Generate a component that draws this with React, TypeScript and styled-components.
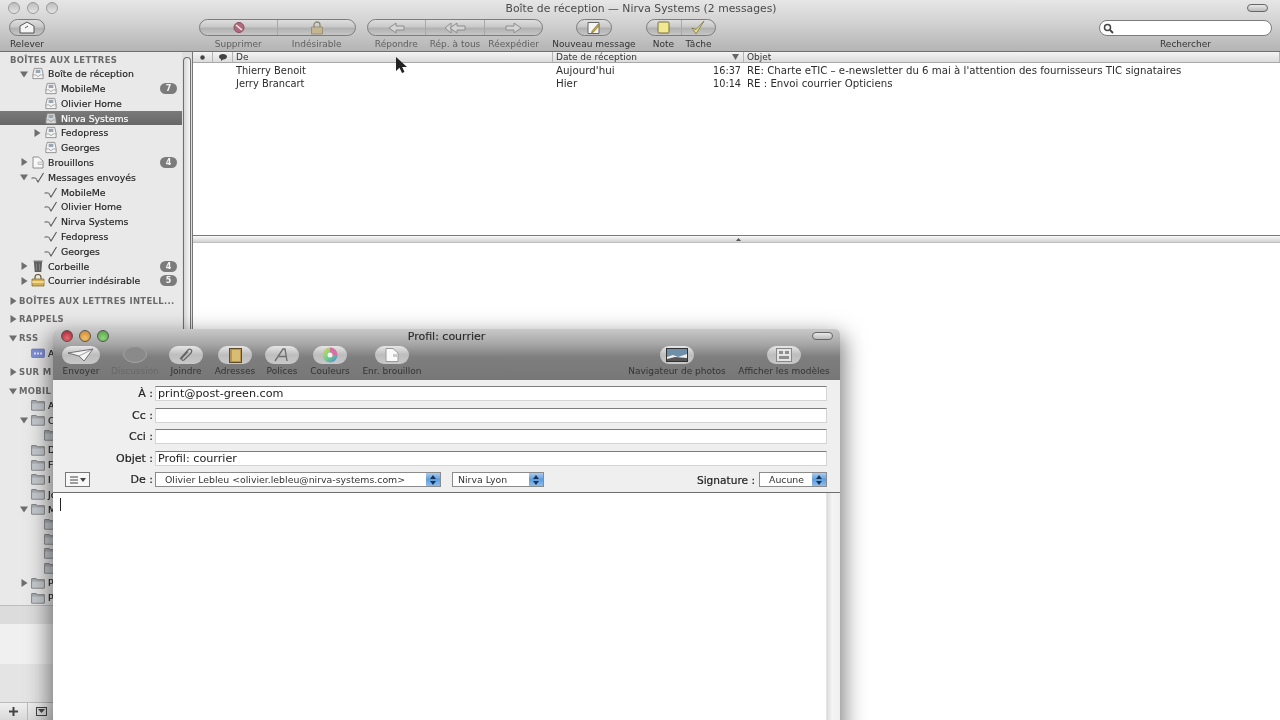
import React from "react";
import styled, { createGlobalStyle } from "styled-components";

const GlobalStyle = createGlobalStyle`
  html, body { margin: 0; padding: 0; background: #fff; }
  body { font-family: "DejaVu Sans", "Liberation Sans", sans-serif; color: #222; }
  * { box-sizing: border-box; }
`;

const Page = styled.div`
  position: relative;
  width: 1280px;
  height: 720px;
  overflow: hidden;
  display: flex;
  flex-direction: column;
  background: #fff;
  filter: blur(0.35px);
`;

/* ---------- main window top ---------- */

const TopBar = styled.header`
  height: 52px;
  flex: none;
  background: linear-gradient(#e6e6e6, #d4d4d4 40%, #b4b4b4);
  border-bottom: 1px solid #6f6f6f;
`;

const TitleRow = styled.div`
  position: relative;
  height: 16px;
  display: flex;
  align-items: center;
  padding: 0 12px 0 8px;
`;

const Lights = styled.div<{ $gap?: number }>`
  display: flex;
  gap: ${(p) => p.$gap || 7}px;
`;

const Light = styled.span<{ $color?: string }>`
  width: 12px;
  height: 12px;
  border-radius: 50%;
  border: 1px solid ${(p) => (p.$color ? "#555" : "#9a9a9a")};
  background: ${(p) => p.$color || "linear-gradient(#bdbdbd, #e4e4e4)"};
`;

const Title = styled.div`
  flex: 1;
  text-align: center;
  font-size: 10.8px;
  color: #4a4a4a;
  padding-right: 23px;
`;

const Pill = styled.span`
  width: 21px;
  height: 8px;
  border-radius: 4px;
  border: 1px solid #666;
  background: linear-gradient(#e8e8e8, #bbb);
`;

const Toolbar = styled.div`
  display: flex;
  align-items: flex-start;
  padding: 3px 8px 0 8px;
`;

const ToolGroup = styled.div<{ $width: number; $gap: number }>`
  width: ${(p) => p.$width}px;
  margin-right: ${(p) => p.$gap}px;
  flex: none;
  display: flex;
  flex-direction: column;
  align-items: center;
`;

const Capsule = styled.div<{ $width: number }>`
  width: ${(p) => p.$width}px;
  height: 17px;
  display: flex;
  border: 1px solid #7c7c7c;
  border-radius: 9px;
  background: linear-gradient(#dedede, #c9c9c9 45%, #b1b1b1 55%, #c6c6c6);
  overflow: hidden;
`;

const CapsuleCell = styled.div`
  flex: 1;
  display: flex;
  align-items: center;
  justify-content: center;
  & + & { border-left: 1px solid #a8a8a8; }
`;

const ToolLabels = styled.div`
  align-self: stretch;
  display: flex;
  margin-top: 1.5px;
`;

const ToolLabel = styled.span<{ $dim?: boolean }>`
  flex: 1;
  text-align: center;
  white-space: nowrap;
  font-size: 9px;
  line-height: 12px;
  color: ${(p) => (p.$dim ? "#5f5f5f" : "#333")};
`;

const SearchGroup = styled.div`
  margin-left: auto;
  width: 173px;
  display: flex;
  flex-direction: column;
  align-items: center;
`;

const SearchBox = styled.div`
  width: 100%;
  height: 16px;
  margin-top: 1px;
  border: 1px solid #7c7c7c;
  border-radius: 8px;
  background: #fff;
  display: flex;
  align-items: center;
  padding-left: 3px;
`;

/* ---------- body of main window ---------- */

const Body = styled.div`
  flex: 1;
  min-height: 0;
  display: flex;
`;

const Sidebar = styled.aside`
  width: 182px;
  flex: none;
  display: flex;
  flex-direction: column;
  background: #e9e9e9;
`;

const SidebarList = styled.div`
  height: 553px;
  flex: none;
  padding-top: 0.5px;
`;

const Row = styled.div<{ $level: number; $selected?: boolean }>`
  height: 14.8px;
  display: flex;
  align-items: center;
  padding-left: ${(p) => 20 + 13 * (p.$level - 1)}px;
  padding-right: 6px;
  font-size: 9.35px;
  -webkit-text-stroke: 0.15px;
  color: ${(p) => (p.$selected ? "#fff" : "#222")};
  background: ${(p) => (p.$selected ? "linear-gradient(#7a7a7a, #676767)" : "transparent")};
  white-space: nowrap;
`;

const SectionRow = styled.div<{ $top: number; $bare?: boolean }>`
  height: 14.8px;
  margin-top: ${(p) => p.$top}px;
  margin-bottom: ${(p) => (p.$bare ? -1 : 0)}px;
  display: flex;
  align-items: center;
  padding-left: ${(p) => (p.$bare ? 10 : 9)}px;
  font-size: 8.5px;
  font-weight: bold;
  letter-spacing: 0.3px;
  color: #6a6a6a;
  white-space: nowrap;
`;

const Twist = styled.span`
  width: 10px;
  flex: none;
  display: flex;
  align-items: center;
`;

const RowIcon = styled.span`
  width: 14px;
  height: 13px;
  flex: none;
  margin: 0 3px 0 1px;
  display: flex;
  align-items: center;
  justify-content: center;
`;

const Badge = styled.span`
  margin-left: auto;
  margin-right: -1px;
  width: 17px;
  height: 11px;
  border-radius: 6px;
  background: #7b7b7b;
  color: #f4f4f4;
  font-size: 8px;
  font-weight: bold;
  line-height: 11px;
  text-align: center;
  -webkit-text-stroke: 0;
`;

const SidebarBands = styled.div`
  flex: 1;
  min-height: 0;
  border-top: 1px solid #bdbdbd;
  background: linear-gradient(#dcdcdc, #dcdcdc 18px, #f0f0f0 18px, #f0f0f0 58px, #e4e4e4 58px);
`;

const SidebarFooter = styled.div`
  height: 18px;
  flex: none;
  display: flex;
  border-top: 1px solid #bbb;
  background: linear-gradient(#efefef, #d9d9d9);
`;

const FooterButton = styled.div`
  width: 28px;
  display: flex;
  align-items: center;
  justify-content: center;
  border-right: 1px solid #bbb;
`;

const ScrollTrack = styled.div`
  width: 11px;
  flex: none;
  background: #dfdfdf;
  border-right: 1px solid #777;
  padding: 5px 1px 0 1px;
`;

const ScrollThumb = styled.div`
  height: 600px;
  border: 1.5px solid #6f6f6f;
  border-bottom: none;
  border-radius: 5px 5px 0 0;
  background: linear-gradient(90deg, #d6d6d6, #f7f7f7);
`;

const Main = styled.main`
  flex: 1;
  min-width: 0;
  display: flex;
  flex-direction: column;
  background: #fff;
`;

const HeaderRow = styled.div`
  height: 11px;
  flex: none;
  display: grid;
  grid-template-columns: 20px 20px 320px 191px 1fr;
  background: linear-gradient(#f4f4f4, #dcdcdc);
  border-bottom: 1px solid #a8a8a8;
  font-size: 9px;
  color: #333;
`;

const HeaderCell = styled.div<{ $center?: boolean }>`
  display: flex;
  align-items: center;
  justify-content: ${(p) => (p.$center ? "center" : "space-between")};
  padding: 0 ${(p) => (p.$center ? 0 : 4)}px 0 ${(p) => (p.$center ? 0 : 3)}px;
  border-right: 1px solid #b4b4b4;
  line-height: 10px;
`;

const MessageList = styled.div`
  height: 172px;
  flex: none;
  padding-top: 1px;
`;

const MessageRow = styled.div`
  height: 12.5px;
  display: grid;
  grid-template-columns: 40px 320px 191px 1fr;
  align-items: baseline;
  line-height: 12.5px;
  font-size: 9.9px;
  color: #2d2d2d;
  white-space: nowrap;
`;

const SenderCell = styled.span`
  grid-column: 2;
  padding-left: 3px;
`;

const DateCell = styled.span`
  display: flex;
  align-items: baseline;
  justify-content: space-between;
  padding: 0 3px;
  font-size: 10.3px;
`;

const TimeText = styled.span`
  font-size: 9.7px;
`;

const SubjectCell = styled.span`
  padding-left: 3px;
  font-size: 10.2px;
`;

const Splitter = styled.div`
  height: 8px;
  flex: none;
  display: flex;
  align-items: center;
  justify-content: center;
  border-top: 1px solid #7a7a7a;
  background: linear-gradient(#fafafa, #d2d2d2);
  border-bottom: 1px solid #c0c0c0;
  padding-left: 3px;
`;

const Preview = styled.div`
  flex: 1;
  background: #fff;
`;

const Cursor = styled.svg`
  position: absolute;
  left: 395px;
  top: 57px;
`;

/* ---------- compose window ---------- */

const ComposeWindow = styled.section`
  position: absolute;
  left: 53px;
  top: 329px;
  width: 787px;
  height: 420px;
  display: flex;
  flex-direction: column;
  background: #fff;
  border-radius: 5px 5px 0 0;
  box-shadow: 0 10px 22px 4px rgba(0, 0, 0, 0.5);
`;

const ComposeHead = styled.div`
  height: 51px;
  flex: none;
  border-radius: 5px 5px 0 0;
  background: linear-gradient(#c9c9c9, #a6a6a6 30%, #7e7e7e 55%, #777);
`;

const ComposeTitleRow = styled.div`
  position: relative;
  height: 14px;
  display: flex;
  align-items: center;
  padding: 0 7px 0 8px;
`;

const ComposeTitle = styled.div`
  flex: 1;
  text-align: center;
  font-size: 11px;
  -webkit-text-stroke: 0.15px;
  color: #2c2c2c;
  padding-right: 28px;
`;

const ComposeTools = styled.div`
  display: flex;
  padding: 3px 9px 0 6px;
`;

const ComposeTool = styled.div<{ $width: number; $pushed?: boolean; $gap?: number }>`
  width: ${(p) => p.$width}px;
  margin-left: ${(p) => (p.$pushed ? "auto" : `${p.$gap || 0}px`)};
  flex: none;
  display: flex;
  flex-direction: column;
  align-items: center;
`;

const ComposeButton = styled.div<{ $width?: number; $faded?: boolean }>`
  width: ${(p) => p.$width || 34}px;
  height: 18px;
  display: flex;
  align-items: center;
  justify-content: center;
  border-radius: 9px;
  background: ${(p) => (p.$faded ? "transparent" : "linear-gradient(#e6e6e6, #bdbdbd 50%, #c9c9c9)")};
`;

const ComposeLabel = styled.span<{ $faded?: boolean }>`
  margin-top: 2px;
  font-size: 9px;
  line-height: 11px;
  white-space: nowrap;
  color: ${(p) => (p.$faded ? "#686868" : "#333")};
`;

const ComposeForm = styled.div`
  height: 113px;
  flex: none;
  padding-top: 6px;
  background: #efefef;
  border-bottom: 1px solid #6e6e6e;
  display: flex;
  flex-direction: column;
`;

const FieldRow = styled.div`
  height: 15px;
  margin-bottom: 6.5px;
  display: flex;
  align-items: center;
  padding-right: 13px;
`;

const FieldLabel = styled.label`
  width: 100px;
  flex: none;
  text-align: right;
  font-size: 11px;
  -webkit-text-stroke: 0.2px;
  color: #222;
  margin-right: 2px;
`;

const FieldInput = styled.div`
  flex: 1;
  height: 15px;
  border: 1px solid #d4d4d4;
  border-top: 1px solid #7d7d7d;
  background: #fff;
  padding-left: 2px;
  font-size: 11.2px;
  line-height: 13px;
  color: #222;
`;

const FromRow = styled.div`
  height: 15px;
  position: relative;
  display: flex;
  align-items: center;
  padding-right: 13px;
`;

const MenuButton = styled.div`
  position: absolute;
  left: 12px;
  top: 0;
  width: 25px;
  height: 15px;
  display: flex;
  align-items: center;
  justify-content: center;
  border: 1px solid #777;
  background: #f7f7f7;
`;

const Select = styled.div<{ $width: number; $gap?: number; $inset?: number }>`
  width: ${(p) => p.$width}px;
  margin-left: ${(p) => p.$gap || 0}px;
  height: 15px;
  flex: none;
  display: flex;
  align-items: center;
  border: 1px solid #8b8b8b;
  background: #fff;
  font-size: 9.35px;
  color: #333;
  padding-left: ${(p) => p.$inset || 9}px;
  white-space: nowrap;
`;

const SelectText = styled.span`
  flex: 1;
`;

const Stepper = styled.span`
  width: 14px;
  height: 13px;
  flex: none;
  display: flex;
  align-items: center;
  justify-content: center;
  background: linear-gradient(#a9cdf0, #5f9fdc 50%, #8cbceb);
`;

const SignatureLabel = styled.span`
  margin-left: auto;
  margin-right: 4px;
  font-size: 10.6px;
  -webkit-text-stroke: 0.2px;
  color: #222;
`;

const ComposeBody = styled.div`
  flex: 1;
  display: flex;
`;

const Editor = styled.div`
  flex: 1;
  padding: 5px 0 0 7px;
  background: #fff;
`;

const Caret = styled.div`
  width: 1px;
  height: 13px;
  background: #222;
`;

const ComposeScroll = styled.div`
  width: 14px;
  flex: none;
  background: linear-gradient(90deg, #dcdcdc, #f4f4f4 40%, #efefef);
  border-left: 1px solid #e4e4e4;
`;

/* ---------- drawings ---------- */

const TwistIcon = ({ open, color = "#6e6e6e" }: { open?: boolean; color?: string }) => (
  <svg width="8" height="8" viewBox="0 0 8 8">
    <path d={open ? "M0 1.5h8L4 7.5z" : "M1.5 0v8l6-4z"} fill={color} />
  </svg>
);

type IconKind = "inbox" | "draft" | "sent" | "trash" | "junk" | "folder" | "rss";

const SidebarIcon = ({ kind, light }: { kind: IconKind; light?: boolean }) => {
  if (kind === "inbox")
    return (
      <svg width="15" height="13" viewBox="0 0 15 13">
        <path d="M3.500 1h8l1.500 6.500v4.500H2V7.500z" fill={light ? "#d8d8d8" : "#f4f4f4"} stroke="#777" strokeWidth=".8" />
        <path d="M5 2.500h5v3.500H5z" fill="#9aa6b2" />
        <path d="M2 8h3.500l1 1.500h2L9.500 8H13" fill="none" stroke="#888" strokeWidth=".7" />
      </svg>
    );
  if (kind === "draft")
    return (
      <svg width="14" height="13" viewBox="0 0 14 13">
        <path d="M2 1h5.500L12 5v7H2z" fill="#f7f7f7" stroke="#777" strokeWidth=".8" />
        <path d="M7 6h5v2.500H7z" fill="#e2e2e2" stroke="#999" strokeWidth=".5" />
      </svg>
    );
  if (kind === "sent")
    return (
      <svg width="14" height="13" viewBox="0 0 14 13">
        <path d="M.5 7.500c2-1.400 3.800-.6 5.300.8" fill="none" stroke="#8a8a8a" strokeWidth="1.300" />
        <path d="M5.500 8.500L7 11 12.500 2" fill="none" stroke="#555" strokeWidth="1.100" />
      </svg>
    );
  if (kind === "trash")
    return (
      <svg width="14" height="14" viewBox="0 0 14 14">
        <path d="M3 3h8l-.7 10H3.700z" fill="#5e5e5e" />
        <path d="M2.500 1.500h9v1.500h-9z" fill="#7d7d7d" />
        <path d="M5.500 4.500v7M8.500 4.500v7" stroke="#999" strokeWidth=".6" />
      </svg>
    );
  if (kind === "junk")
    return (
      <svg width="14" height="13" viewBox="0 0 14 13">
        <path d="M4 5V3.500a3 3 0 016 0V5" fill="none" stroke="#6a5a30" strokeWidth="1.200" />
        <path d="M1 5h12v7H1z" fill="#d9b04e" stroke="#7a6427" strokeWidth=".7" />
        <path d="M1 8h12" stroke="#fff3c4" strokeWidth="1.200" />
      </svg>
    );
  if (kind === "rss")
    return (
      <svg width="14" height="11" viewBox="0 0 14 11">
        <rect x=".5" y="1" width="13" height="8.500" rx="1" fill="#7f8fd6" stroke="#5b68ad" strokeWidth=".6" />
        <path d="M3 5.500h8" stroke="#dfe4ff" strokeWidth="2" strokeDasharray="2 1" />
      </svg>
    );
  return (
    <svg width="15" height="12" viewBox="0 0 15 12">
      <path d="M.7 2.500V1.300h5l1 1.200h7.600v9H.7z" fill="#aab0b5" stroke="#666" strokeWidth=".8" />
      <path d="M1.200 4.500h12.600v6.500H1.200z" fill="#c5cacf" />
    </svg>
  );
};

const ToolIcon = ({ name }: { name: string }) => {
  switch (name) {
    case "fetch":
      return (
        <svg width="20" height="13" viewBox="0 0 20 13">
          <path d="M3 5l7-4 7 4v7H3z" fill="#f4f4f4" stroke="#555" />
          <path d="M8 7l3-2" stroke="#555" />
        </svg>
      );
    case "delete":
      return (
        <svg width="14" height="13" viewBox="0 0 14 13">
          <circle cx="7" cy="6.500" r="5" fill="#b06a80" stroke="#8b4a5e" />
          <path d="M4 4l6 5" stroke="#eed" strokeWidth="1.500" />
        </svg>
      );
    case "junk":
      return (
        <svg width="14" height="14" viewBox="0 0 14 14">
          <path d="M4 6V4a3 3 0 016 0v2" fill="none" stroke="#8a8a78" strokeWidth="1.300" />
          <path d="M1.500 6h11v7h-11z" fill="#c6b690" stroke="#8c8268" strokeWidth=".7" />
        </svg>
      );
    case "reply":
      return (
        <svg width="18" height="12" viewBox="0 0 18 12">
          <path d="M1 6l7-5v3h8v4H8v3z" fill="#d4d4d4" stroke="#8e8e8e" />
        </svg>
      );
    case "replyAll":
      return (
        <svg width="22" height="12" viewBox="0 0 22 12">
          <path d="M1 6l6-5v10z" fill="#d4d4d4" stroke="#8e8e8e" />
          <path d="M6 6l7-5v3h8v4h-8v3z" fill="#d4d4d4" stroke="#8e8e8e" />
        </svg>
      );
    case "forward":
      return (
        <svg width="18" height="12" viewBox="0 0 18 12">
          <path d="M17 6l-7-5v3H2v4h8v3z" fill="#d4d4d4" stroke="#8e8e8e" />
        </svg>
      );
    case "new":
      return (
        <svg width="16" height="14" viewBox="0 0 16 14">
          <path d="M2 1.500h11v11H2z" fill="#f6f6f6" stroke="#666" />
          <path d="M6 10l6-7 1.500 1.200-6 7-2 .6z" fill="#c9a93a" stroke="#6d5a1d" strokeWidth=".5" />
        </svg>
      );
    case "note":
      return (
        <svg width="13" height="13" viewBox="0 0 13 13">
          <rect x="1" y="1" width="11" height="11" rx="1" fill="#f2e88f" stroke="#77714a" />
        </svg>
      );
    case "task":
      return (
        <svg width="16" height="15" viewBox="0 0 16 15">
          <path d="M2 8l4 6 8-13-8 8.500z" fill="#e8dc8a" stroke="#7b7544" strokeWidth=".8" />
        </svg>
      );
    case "send":
      return (
        <svg width="28" height="14" viewBox="0 0 28 14">
          <path d="M1 5l25-4-9 12-5-5z" fill="#f4f4f4" stroke="#555" strokeWidth=".8" />
          <path d="M26 1L12 8" stroke="#777" strokeWidth=".7" />
        </svg>
      );
    case "chat":
      return (
        <svg width="26" height="18" viewBox="0 0 26 18">
          <ellipse cx="13" cy="8.500" rx="11.500" ry="8" fill="#8a8a8a" stroke="#a4a4a4" />
        </svg>
      );
    case "clip":
      return (
        <svg width="18" height="16" viewBox="0 0 18 16">
          <path d="M3 12L11 3c2-2 5 0 3 3l-7 7c-1.500 1-3-.5-2-2l6-6.500" fill="none" stroke="#666" strokeWidth="1.200" />
        </svg>
      );
    case "book":
      return (
        <svg width="13" height="15" viewBox="0 0 13 15">
          <rect x=".5" y=".5" width="12" height="14" fill="#b7944e" stroke="#5f4d2a" />
          <rect x="3" y="2" width="8" height="11" fill="#d9bc74" />
        </svg>
      );
    case "fonts":
      return (
        <svg width="16" height="14" viewBox="0 0 16 14">
          <path d="M1 13L9 1h2l2 12M5 8.500h7" fill="none" stroke="#707070" strokeWidth="1.400" />
        </svg>
      );
    case "colors":
      return (
        <svg width="16" height="16" viewBox="0 0 16 16">
          <defs>
            <linearGradient id="wheel" x1="0" y1="0" x2="1" y2="1">
              <stop offset="0" stopColor="#e8d458" />
              <stop offset=".5" stopColor="#6fcf8e" />
              <stop offset="1" stopColor="#5a7fdb" />
            </linearGradient>
          </defs>
          <circle cx="8" cy="8" r="7.500" fill="url(#wheel)" />
          <path d="M8 .5A7.500 7.500 0 0115.500 8H8z" fill="#d670a0" />
          <circle cx="8" cy="8" r="2.500" fill="#f3f3f3" />
        </svg>
      );
    case "draft":
      return (
        <svg width="16" height="14" viewBox="0 0 16 14">
          <path d="M2 .5h7L14 5v8.500H2z" fill="#fafafa" stroke="#999" />
          <path d="M9 6h5v3H9z" fill="#ccc" />
        </svg>
      );
    case "photos":
      return (
        <svg width="22" height="14" viewBox="0 0 22 14">
          <rect x=".5" y=".5" width="21" height="13" fill="#6f8fa8" stroke="#333" />
          <path d="M1 9l6-2 5 2 9-3v7H1z" fill="#efefef" />
          <path d="M1 11l8-2 12 1v3H1z" fill="#555" />
        </svg>
      );
    default:
      return (
        <svg width="16" height="14" viewBox="0 0 16 14">
          <rect x=".5" y=".5" width="15" height="13" fill="#e4e4e4" stroke="#888" />
          <path d="M3 3h4v3H3zM9 3h4v3H9zM3 8h10v3H3z" fill="#8f8f8f" />
        </svg>
      );
  }
};

const SearchGlass = () => (
  <svg width="11" height="11" viewBox="0 0 11 11">
    <circle cx="4.500" cy="4.500" r="3" fill="none" stroke="#444" strokeWidth="1.500" />
    <path d="M7 7l3 3" stroke="#444" strokeWidth="1.800" />
  </svg>
);

const StepperArrows = () => (
  <svg width="6" height="10" viewBox="0 0 6 10">
    <path d="M3 0l3 4H0zM3 10L0 6h6z" fill="#17355c" />
  </svg>
);

/* ---------- data ---------- */

interface MailboxRow {
  label: string;
  level: number;
  icon: IconKind;
  open?: boolean;
  twist?: boolean;
  badge?: string;
  selected?: boolean;
}

const mailboxes: MailboxRow[] = [
  { label: "Boîte de réception", level: 1, icon: "inbox", twist: true, open: true },
  { label: "MobileMe", level: 2, icon: "inbox", badge: "7" },
  { label: "Olivier Home", level: 2, icon: "inbox" },
  { label: "Nirva Systems", level: 2, icon: "inbox", selected: true },
  { label: "Fedopress", level: 2, icon: "inbox", twist: true },
  { label: "Georges", level: 2, icon: "inbox" },
  { label: "Brouillons", level: 1, icon: "draft", twist: true, badge: "4" },
  { label: "Messages envoyés", level: 1, icon: "sent", twist: true, open: true },
  { label: "MobileMe", level: 2, icon: "sent" },
  { label: "Olivier Home", level: 2, icon: "sent" },
  { label: "Nirva Systems", level: 2, icon: "sent" },
  { label: "Fedopress", level: 2, icon: "sent" },
  { label: "Georges", level: 2, icon: "sent" },
  { label: "Corbeille", level: 1, icon: "trash", twist: true, badge: "4" },
  { label: "Courrier indésirable", level: 1, icon: "junk", twist: true, badge: "5" },
];

const mobileFolders: MailboxRow[] = [
  { label: "A", level: 1, icon: "folder" },
  { label: "C", level: 1, icon: "folder", twist: true, open: true },
  { label: "", level: 2, icon: "folder" },
  { label: "D", level: 1, icon: "folder" },
  { label: "F", level: 1, icon: "folder" },
  { label: "I", level: 1, icon: "folder" },
  { label: "Jo", level: 1, icon: "folder" },
  { label: "M", level: 1, icon: "folder", twist: true, open: true },
  { label: "", level: 2, icon: "folder" },
  { label: "", level: 2, icon: "folder" },
  { label: "", level: 2, icon: "folder" },
  { label: "", level: 2, icon: "folder" },
  { label: "P", level: 1, icon: "folder", twist: true },
  { label: "P", level: 1, icon: "folder" },
];

const MailboxItem = ({ row }: { row: MailboxRow }) => (
  <Row $level={row.level} $selected={row.selected}>
    <Twist>{row.twist && <TwistIcon open={row.open} />}</Twist>
    <RowIcon>
      <SidebarIcon kind={row.icon} light={row.selected} />
    </RowIcon>
    {row.label}
    {row.badge && <Badge>{row.badge}</Badge>}
  </Row>
);

const messages = [
  {
    from: "Thierry Benoit",
    day: "Aujourd'hui",
    time: "16:37",
    subject: "RE: Charte eTIC – e-newsletter du 6 mai à l'attention des fournisseurs TIC signataires",
  },
  { from: "Jerry Brancart", day: "Hier", time: "10:14", subject: "RE : Envoi courrier Opticiens" },
];

const composeTools = [
  { label: "Envoyer", icon: "send", width: 44, button: 38 },
  { label: "Discussion", icon: "chat", width: 64, faded: true },
  { label: "Joindre", icon: "clip", width: 38 },
  { label: "Adresses", icon: "book", width: 60 },
  { label: "Polices", icon: "fonts", width: 34 },
  { label: "Couleurs", icon: "colors", width: 62 },
  { label: "Enr. brouillon", icon: "draft", width: 62 },
];

const App: React.FC = () => (
  <Page>
    <GlobalStyle />
    <TopBar>
      <TitleRow>
        <Lights>
          <Light />
          <Light />
          <Light />
        </Lights>
        <Title>Boîte de réception — Nirva Systems (2 messages)</Title>
        <Pill />
      </TitleRow>
      <Toolbar>
        <ToolGroup $width={38} $gap={153}>
          <Capsule $width={36}>
            <CapsuleCell>
              <ToolIcon name="fetch" />
            </CapsuleCell>
          </Capsule>
          <ToolLabels>
            <ToolLabel>Relever</ToolLabel>
          </ToolLabels>
        </ToolGroup>
        <ToolGroup $width={157} $gap={11}>
          <Capsule $width={157}>
            <CapsuleCell>
              <ToolIcon name="delete" />
            </CapsuleCell>
            <CapsuleCell>
              <ToolIcon name="junk" />
            </CapsuleCell>
          </Capsule>
          <ToolLabels>
            <ToolLabel $dim>Supprimer</ToolLabel>
            <ToolLabel $dim>Indésirable</ToolLabel>
          </ToolLabels>
        </ToolGroup>
        <ToolGroup $width={176} $gap={9}>
          <Capsule $width={176}>
            <CapsuleCell>
              <ToolIcon name="reply" />
            </CapsuleCell>
            <CapsuleCell>
              <ToolIcon name="replyAll" />
            </CapsuleCell>
            <CapsuleCell>
              <ToolIcon name="forward" />
            </CapsuleCell>
          </Capsule>
          <ToolLabels>
            <ToolLabel $dim>Répondre</ToolLabel>
            <ToolLabel $dim>Rép. à tous</ToolLabel>
            <ToolLabel $dim>Réexpédier</ToolLabel>
          </ToolLabels>
        </ToolGroup>
        <ToolGroup $width={84} $gap={10}>
          <Capsule $width={36}>
            <CapsuleCell>
              <ToolIcon name="new" />
            </CapsuleCell>
          </Capsule>
          <ToolLabels>
            <ToolLabel>Nouveau message</ToolLabel>
          </ToolLabels>
        </ToolGroup>
        <ToolGroup $width={70} $gap={0}>
          <Capsule $width={70}>
            <CapsuleCell>
              <ToolIcon name="note" />
            </CapsuleCell>
            <CapsuleCell>
              <ToolIcon name="task" />
            </CapsuleCell>
          </Capsule>
          <ToolLabels>
            <ToolLabel>Note</ToolLabel>
            <ToolLabel>Tâche</ToolLabel>
          </ToolLabels>
        </ToolGroup>
        <SearchGroup>
          <SearchBox>
            <SearchGlass />
          </SearchBox>
          <ToolLabels>
            <ToolLabel>Rechercher</ToolLabel>
          </ToolLabels>
        </SearchGroup>
      </Toolbar>
    </TopBar>

    <Body>
      <Sidebar>
        <SidebarList>
          <SectionRow $top={0} $bare>
            BOÎTES AUX LETTRES
          </SectionRow>
          {mailboxes.map((row, i) => (
            <MailboxItem key={i} row={row} />
          ))}
          <SectionRow $top={5}>
            <Twist>
              <TwistIcon />
            </Twist>
            BOÎTES AUX LETTRES INTELL...
          </SectionRow>
          <SectionRow $top={4}>
            <Twist>
              <TwistIcon />
            </Twist>
            RAPPELS
          </SectionRow>
          <SectionRow $top={4}>
            <Twist>
              <TwistIcon open />
            </Twist>
            RSS
          </SectionRow>
          <MailboxItem row={{ label: "A", level: 1, icon: "rss" }} />
          <SectionRow $top={4}>
            <Twist>
              <TwistIcon />
            </Twist>
            SUR M
          </SectionRow>
          <SectionRow $top={4}>
            <Twist>
              <TwistIcon open />
            </Twist>
            MOBIL
          </SectionRow>
          {mobileFolders.map((row, i) => (
            <MailboxItem key={i} row={row} />
          ))}
        </SidebarList>
        <SidebarBands />
        <SidebarFooter>
          <FooterButton>
            <svg width="9" height="9" viewBox="0 0 9 9">
              <path d="M3.500 0h2v3.500H9v2H5.500V9h-2V5.500H0v-2h3.500z" fill="#444" />
            </svg>
          </FooterButton>
          <FooterButton>
            <svg width="11" height="9" viewBox="0 0 11 9">
              <rect x=".5" y=".5" width="10" height="8" fill="#ddd" stroke="#444" />
              <path d="M2 2h7L5.500 6z" fill="#444" />
            </svg>
          </FooterButton>
        </SidebarFooter>
      </Sidebar>
      <ScrollTrack>
        <ScrollThumb />
      </ScrollTrack>
      <Main>
        <HeaderRow>
          <HeaderCell $center>
            <svg width="5" height="5" viewBox="0 0 5 5">
              <circle cx="2.500" cy="2.500" r="2.200" fill="#444" />
            </svg>
          </HeaderCell>
          <HeaderCell $center>
            <svg width="8" height="7" viewBox="0 0 8 7">
              <path d="M4 0c2.200 0 4 1.100 4 2.700S6.200 5.400 4 5.400L2 7V5.100C.8 4.700 0 3.800 0 2.700 0 1.100 1.800 0 4 0z" fill="#444" />
            </svg>
          </HeaderCell>
          <HeaderCell>De</HeaderCell>
          <HeaderCell>
            Date de réception
            <svg width="7" height="6" viewBox="0 0 7 6">
              <path d="M0 0h7L3.500 6z" fill="#666" />
            </svg>
          </HeaderCell>
          <HeaderCell>Objet</HeaderCell>
        </HeaderRow>
        <MessageList>
          {messages.map((m) => (
            <MessageRow key={m.from}>
              <SenderCell>{m.from}</SenderCell>
              <DateCell>
                <span>{m.day}</span>
                <TimeText>{m.time}</TimeText>
              </DateCell>
              <SubjectCell>{m.subject}</SubjectCell>
            </MessageRow>
          ))}
        </MessageList>
        <Splitter>
          <svg width="5" height="3" viewBox="0 0 5 3">
            <path d="M2.500 0L5 3H0z" fill="#555" />
          </svg>
        </Splitter>
        <Preview />
      </Main>
    </Body>

    <Cursor width="12" height="17" viewBox="0 0 12 17">
      <path d="M1 0v14l3.500-3.200L7 16l2.500-1-2.300-5H12z" fill="#222" />
    </Cursor>

    <ComposeWindow>
      <ComposeHead>
        <ComposeTitleRow>
          <Lights $gap={6}>
            <Light $color="radial-gradient(circle at 50% 70%, #e86a72, #a01d2c)" />
            <Light $color="radial-gradient(circle at 50% 70%, #f3c06a, #c9812a)" />
            <Light $color="radial-gradient(circle at 50% 70%, #8fd67d, #4f9a3f)" />
          </Lights>
          <ComposeTitle>Profil: courrier</ComposeTitle>
          <Pill />
        </ComposeTitleRow>
        <ComposeTools>
          {composeTools.map((t) => (
            <ComposeTool key={t.label} $width={t.width}>
              <ComposeButton $width={t.button} $faded={t.faded}>
                <ToolIcon name={t.icon} />
              </ComposeButton>
              <ComposeLabel $faded={t.faded}>{t.label}</ComposeLabel>
            </ComposeTool>
          ))}
          <ComposeTool $width={100} $pushed>
            <ComposeButton>
              <ToolIcon name="photos" />
            </ComposeButton>
            <ComposeLabel>Navigateur de photos</ComposeLabel>
          </ComposeTool>
          <ComposeTool $width={94} $gap={10}>
            <ComposeButton>
              <ToolIcon name="templates" />
            </ComposeButton>
            <ComposeLabel>Afficher les modèles</ComposeLabel>
          </ComposeTool>
        </ComposeTools>
      </ComposeHead>
      <ComposeForm>
        <FieldRow>
          <FieldLabel>À :</FieldLabel>
          <FieldInput>print@post-green.com</FieldInput>
        </FieldRow>
        <FieldRow>
          <FieldLabel>Cc :</FieldLabel>
          <FieldInput />
        </FieldRow>
        <FieldRow>
          <FieldLabel>Cci :</FieldLabel>
          <FieldInput />
        </FieldRow>
        <FieldRow>
          <FieldLabel>Objet :</FieldLabel>
          <FieldInput>Profil: courrier</FieldInput>
        </FieldRow>
        <FromRow>
          <MenuButton>
            <svg width="16" height="8" viewBox="0 0 16 8">
              <path d="M0 1h8M0 4h8M0 7h8" stroke="#444" />
              <path d="M10 2h6l-3 4z" fill="#444" />
            </svg>
          </MenuButton>
          <FieldLabel>De :</FieldLabel>
          <Select $width={286}>
            <SelectText>Olivier Lebleu &lt;olivier.lebleu@nirva-systems.com&gt;</SelectText>
            <Stepper>
              <StepperArrows />
            </Stepper>
          </Select>
          <Select $width={92} $gap={11} $inset={5}>
            <SelectText>Nirva Lyon</SelectText>
            <Stepper>
              <StepperArrows />
            </Stepper>
          </Select>
          <SignatureLabel>Signature :</SignatureLabel>
          <Select $width={68}>
            <SelectText>Aucune</SelectText>
            <Stepper>
              <StepperArrows />
            </Stepper>
          </Select>
        </FromRow>
      </ComposeForm>
      <ComposeBody>
        <Editor>
          <Caret />
        </Editor>
        <ComposeScroll />
      </ComposeBody>
    </ComposeWindow>
  </Page>
);

export default App;
